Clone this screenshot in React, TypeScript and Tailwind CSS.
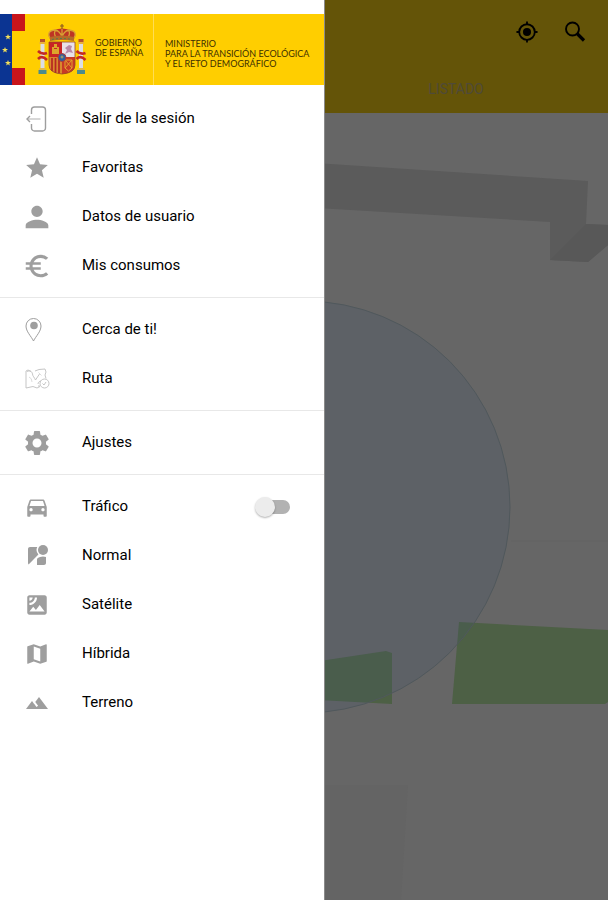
import React, { useState } from "react";
import clsx from "clsx";
import {
  MdDirectionsCar,
  MdEuroSymbol,
  MdMap,
  MdPerson,
  MdSatellite,
  MdSettings,
  MdStar,
  MdStreetview,
  MdTerrain,
} from "react-icons/md";

type IconProps = { className?: string };

type Item = {
  label: string;
  icon: React.ComponentType<IconProps>;
  size: string;
};

function LocateIcon({ className }: IconProps) {
  return (
    <svg viewBox="0 0 24 24" className={className} fill="none" stroke="currentColor" strokeWidth="2">
      <circle cx="12" cy="12" r="8.500" />
      <circle cx="12" cy="12" r="4.400" fill="currentColor" stroke="none" />
      <path d="M12 0.500v3M12 20.500v3M0.500 12h3M20.500 12h3" />
    </svg>
  );
}

function SearchIcon({ className }: IconProps) {
  return (
    <svg viewBox="0 0 22 22" className={className} fill="none" stroke="currentColor">
      <circle cx="8.500" cy="8" r="6.500" strokeWidth="1.900" />
      <path d="M13 12.500l7 7" strokeWidth="3.200" />
    </svg>
  );
}

function ExitIcon({ className }: IconProps) {
  return (
    <svg viewBox="0 0 26 26" className={className} fill="none" stroke="currentColor" strokeWidth="1.4">
      <path d="M7.500 8V4a3 3 0 0 1 3-3h8a3 3 0 0 1 3 3v18a3 3 0 0 1-3 3h-8a3 3 0 0 1-3-3v-4" />
      <path d="M16.500 13H3" strokeOpacity="0.6" />
      <path d="M6 10l-3 3 3 3" />
    </svg>
  );
}

function PinIcon({ className }: IconProps) {
  return (
    <svg viewBox="0 0 26 26" className={className} fill="none" stroke="currentColor">
      <path d="M9.500 24C7 19 2 14.500 2 9a7.500 7.500 0 0 1 15 0c0 5.500-5 10-7.500 15z" />
      <circle cx="10" cy="8.500" r="3.800" fill="currentColor" stroke="none" />
    </svg>
  );
}

function RouteIcon({ className }: IconProps) {
  return (
    <svg viewBox="0 0 26 26" className={className} fill="none" stroke="currentColor" strokeWidth="0.9" opacity="0.65">
      <path d="M16 20.500l-3 1.500-4-1.500-7 1.500V5l2-1 3 1.500M11 5l4-1.500 6-.500 1 3-1 3 1 3.500" />
      <path d="M3 5.500c3-1.500 5 0 5.500 2.500 0 2 2 3.500 3 6l4-6" />
      <path d="M5 11q3 1 3 5M14.500 6.500l3 3" strokeOpacity="0.6" />
      <circle cx="20.500" cy="17.500" r="4.500" />
      <path d="M14 18c0-2 2-3 3-3M14 20h2M18.500 17.500l1.500 1.500 2-3" />
    </svg>
  );
}

const groups: Item[][] = [
  [
    { label: "Salir de la sesión", icon: ExitIcon, size: "size-[26px]" },
    { label: "Favoritas", icon: MdStar, size: "size-[26px]" },
    { label: "Datos de usuario", icon: MdPerson, size: "size-[34px]" },
    { label: "Mis consumos", icon: MdEuroSymbol, size: "size-[30px]" },
  ],
  [
    { label: "Cerca de ti!", icon: PinIcon, size: "size-[26px]" },
    { label: "Ruta", icon: RouteIcon, size: "size-[26px]" },
  ],
  [{ label: "Ajustes", icon: MdSettings, size: "size-[30px]" }],
  [
    { label: "Tráfico", icon: MdDirectionsCar, size: "size-[26px]" },
    { label: "Normal", icon: MdStreetview, size: "size-6" },
    { label: "Satélite", icon: MdSatellite, size: "size-[26px]" },
    { label: "Híbrida", icon: MdMap, size: "size-[26px]" },
    { label: "Terreno", icon: MdTerrain, size: "size-6" },
  ],
];

function Flags() {
  return (
    <svg viewBox="0 0 25 71" className="h-full w-[25px] shrink-0">
      <rect width="13" height="71" fill="#0b3492" />
      <rect x="12" width="13" height="71" fill="#ffce00" />
      <rect x="12" width="13" height="17" fill="#c8151b" />
      <rect x="12" y="54" width="13" height="17" fill="#c8151b" />
      {[
        [8, 23],
        [5, 36],
        [8, 49],
      ].map(([x, y]) => (
        <path
          key={y}
          transform={`translate(${x} ${y})`}
          d="M0-3L.8-1H3L1.200.400 1.900 2.600 0 1.300-1.900 2.600-1.200.400-3-1H-.8z"
          fill="#f3df5a"
        />
      ))}
    </svg>
  );
}

function Pillar({ x }: { x: number }) {
  return (
    <g transform={`translate(${x} 0)`}>
      <rect x="-2.500" y="15" width="5" height="3" fill="#b5502c" />
      <rect x="-3" y="18" width="6" height="2" fill="#e9b03c" />
      <rect x="-2" y="20" width="4" height="25" fill="#dcdde4" />
      <path d="M-4.500 27q4 4 9 2M-4.500 35q4-4 9 1" stroke="#c42a24" strokeWidth="2.600" fill="none" />
      <rect x="-3.500" y="44" width="7" height="2" fill="#e2ba4a" />
      <rect x="-4" y="46" width="8" height="4" fill="#4c8b8c" />
    </g>
  );
}

function Crest() {
  return (
    <svg viewBox="0 0 50 52" className="h-[52px] w-[50px] shrink-0" aria-hidden="true">
      <Pillar x={5.5} />
      <Pillar x={44} />
      <path d="M25 0v5M23 2h4" stroke="#8f5a20" strokeWidth="1.200" />
      <path d="M13 15Q9 8 17 6q8-3 16 0 8 2 4 9z" fill="#bd3425" />
      <path d="M13 14Q9 7 18 6q5 1 7 7 2-6 7-7 9 1 5 8M19 14q-3-6 0-8M31 14q3-6 0-8M25 5v9" stroke="#d9a034" strokeWidth="1.300" fill="none" />
      <path d="M13 13q12-3 24 0v4q-12-2-24 0z" fill="#b66a28" />
      <path d="M15 15.500q10-2 20 0" stroke="#527f4a" strokeDasharray="2 2" fill="none" />
      <path d="M12 18h13v15H12z" fill="#c92425" />
      <path d="M25 18h13v15H25z" fill="#e9e2e8" />
      <path d="M12 33h13v17q-13-1-13-9z" fill="#d9882d" />
      <path d="M25 33h13v8q0 8-13 9z" fill="#c93a25" />
      <path d="M15 30v-7h2v2h3v-2h2v7zM17 20h3v4h-3z" fill="#dda62b" />
      <path d="M28 30l2-4-2-2 4-3 3 1-1 3 2 4-4-1z" fill="#b98aaa" />
      <path d="M15 34v13M18.500 34v15M22 34v15" stroke="#b62622" strokeWidth="1.700" />
      <path d="M28 36h7v8l-3.500 3L28 44zM28 36l7 8M35 36l-7 8" stroke="#e2a22d" fill="none" />
      <circle cx="25" cy="33.500" r="4" fill="#2f5f9c" stroke="#b33a36" />
      <path d="M23.500 33h3M25 31.500v3" stroke="#d5b354" strokeWidth="0.800" />
      <path d="M12 18h26v23q0 8-13 9-13-1-13-9z" fill="none" stroke="#94452a" strokeWidth="0.800" />
    </svg>
  );
}

function MapView() {
  return (
    <svg viewBox="0 0 608 787" preserveAspectRatio="xMidYMid slice" className="w-full flex-1 bg-[#666666]">
      <path d="M300 49L588 68 586 111 608 112V132L588 149 550 147V109L300 94z" fill="#5b5b5b" />
      <path d="M550 147L586 111 608 112V132L588 149z" fill="#585858" />
      <path d="M459 509L608 517V589L605 591 452 591z" fill="#4d6045" />
      <path d="M300 551L386 538 392 540V591L300 586z" fill="#4d6045" />
      <path d="M300 672H408L401 787H300z" fill="#646464" />
      <circle cx="304" cy="394" r="206" fill="#40546a" fillOpacity="0.220" stroke="#50585c" />
      <path d="M511 428H608" stroke="#636363" />
    </svg>
  );
}

function Switch({ id }: { id: string }) {
  const [on, setOn] = useState(false);
  return (
    <input
      id={id}
      type="checkbox"
      role="switch"
      checked={on}
      onChange={(e) => setOn(e.target.checked)}
      className="relative h-[14px] w-8 cursor-pointer appearance-none rounded-full bg-[#b2b2b2] before:absolute before:-top-[3px] before:-left-[3px] before:size-5 before:rounded-full before:bg-[#ececec] before:shadow-[0_1px_2px_rgba(0,0,0,0.3)] checked:before:left-4"
    />
  );
}

function DrawerRow({ item }: { item: Item }) {
  const Icon = item.icon;
  const content = (
    <>
      <span className="flex w-[34px] shrink-0 justify-center text-[#9e9e9e]">
        <Icon className={clsx("shrink-0", item.size)} />
      </span>
      <span className="grow">{item.label}</span>
    </>
  );
  const row = "flex h-[49px] w-full items-center gap-7 pl-5 pr-[34px] text-left text-[15px] text-black";

  if (item.label === "Tráfico") {
    return (
      <li>
        <label htmlFor="trafico" className={row}>
          {content}
          <Switch id="trafico" />
        </label>
      </li>
    );
  }
  return (
    <li>
      <button type="button" className={row}>
        {content}
      </button>
    </li>
  );
}

function Drawer() {
  return (
    <aside className="absolute inset-y-0 left-0 w-[53.5%] border-r border-[#8a8a8a] bg-white pt-[14px]">
      <header className="flex h-[71px] items-center overflow-hidden bg-[#ffce00] font-[Lato,sans-serif] text-[9px] leading-[10px] text-[#3d3000]">
        <Flags />
        <div className="flex h-full items-center gap-2 px-3">
          <Crest />
          <p className="w-[46px] whitespace-nowrap pb-1">
            GOBIERNO
            <br />
            DE ESPAÑA
          </p>
        </div>
        <p className="flex h-full items-center whitespace-nowrap border-l border-[#ffdd55] pl-[11px] pt-2">
          MINISTERIO
          <br />
          PARA LA TRANSICIÓN ECOLÓGICA
          <br />
          Y EL RETO DEMOGRÁFICO
        </p>
      </header>
      <nav className="pt-[9px]">
        {groups.map((items, i) => (
          <ul key={i} className={clsx(i > 0 && "mt-[7px] border-t border-[#e8e8e8] pt-[7px]")}>
            {items.map((item) => (
              <DrawerRow key={item.label} item={item} />
            ))}
          </ul>
        ))}
      </nav>
    </aside>
  );
}

export default function App() {
  return (
    <div className="relative flex min-h-screen flex-col overflow-hidden border-b border-[#4a4a4a] bg-[#666666] font-[Roboto,sans-serif]">
      <header className="bg-[#645408] text-black">
        <div className="flex h-16 items-center justify-end gap-[26px] pr-[22px]">
          <button type="button" aria-label="Mi ubicación">
            <LocateIcon className="size-[22px]" />
          </button>
          <button type="button" aria-label="Buscar">
            <SearchIcon className="size-[22px]" />
          </button>
        </div>
        <div className="flex h-[49px] justify-end">
          <button type="button" className="w-1/2 text-sm text-[#4f4a38]">
            LISTADO
          </button>
        </div>
      </header>
      <MapView />
      <Drawer />
    </div>
  );
}
